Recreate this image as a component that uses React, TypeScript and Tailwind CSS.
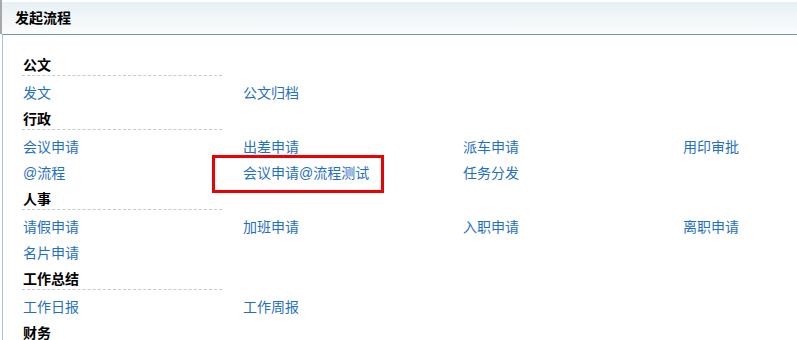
import React from "react";

interface Section {
  title: string;
  links: string[];
}

const SECTIONS: Section[] = [
  { title: "公文", links: ["发文", "公文归档"] },
  { title: "行政", links: ["会议申请", "出差申请", "派车申请", "用印审批", "@流程", "会议申请@流程测试", "任务分发"] },
  { title: "人事", links: ["请假申请", "加班申请", "入职申请", "离职申请", "名片申请"] },
  { title: "工作总结", links: ["工作日报", "工作周报"] },
  { title: "财务", links: [] },
];

export default function App() {
  return (
    <div
      className="relative flex h-[340px] w-[797px] overflow-hidden bg-white text-[14px] text-black"
      style={{ fontFamily: '"Liberation Sans", "Noto Sans CJK SC", sans-serif' }}
    >
      {/* frame edge at left */}
      <div className="w-[2px] shrink-0">
        <div className="h-[34px] bg-[#a8a8a8]" />
      </div>

      <div className="flex min-w-0 flex-1 flex-col">
        {/* Panel header */}
        <div className="mt-[2px] flex h-[33px] shrink-0 items-center border-b border-[#7097bf] bg-gradient-to-b from-[#e7f0f5] to-[#fbfcfd] pl-[13px] font-bold">
          发起流程
        </div>

        {/* Panel body */}
        <div className="flex-1 shrink-0 border-l border-[#a3c2e8] pl-[19px] pt-[17px]">
          {SECTIONS.map((s) => (
            <div key={s.title}>
              <div className="mb-[4px] h-[24px] w-[200px] border-b border-dashed border-[#c9c9c9] pl-[1px] pt-[3px] font-bold leading-[20px]">
                {s.title}
              </div>
              {s.links.length > 0 && (
                <div className="grid grid-cols-[220px_220px_220px_220px]">
                  {s.links.map((l) => (
                    <a key={l} className="h-[26px] cursor-pointer whitespace-nowrap pl-[1px] leading-[26px] text-[#1f6fc6]">
                      {l}
                    </a>
                  ))}
                </div>
              )}
            </div>
          ))}
        </div>
      </div>

      {/* red annotation box */}
      <div className="pointer-events-none absolute left-[212px] top-[155px] h-[38px] w-[172px] border-[3px] border-[#ee0000]" />
    </div>
  );
}
